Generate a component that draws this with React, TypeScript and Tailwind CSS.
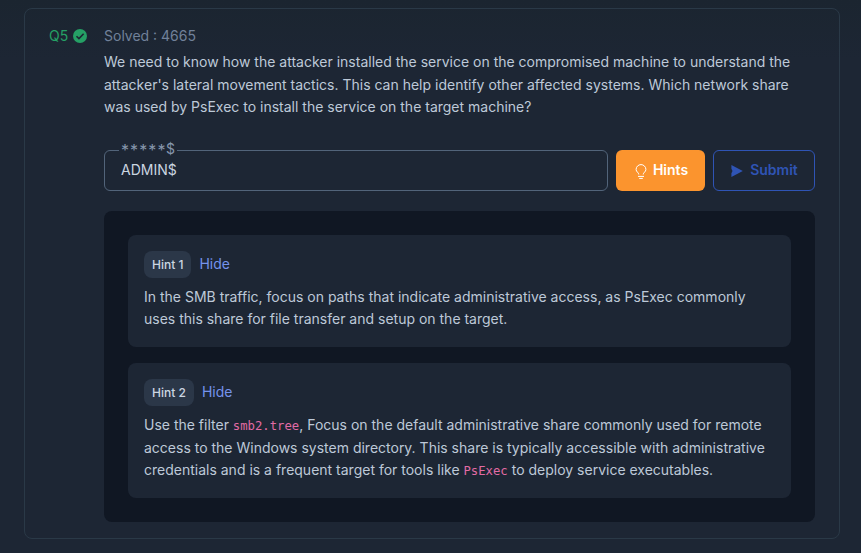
import type { ReactNode } from "react";

function CheckBadge() {
  return (
    <svg viewBox="0 0 24 24" className="h-[14px] w-[14px] shrink-0" aria-hidden="true">
      <circle cx="12" cy="12" r="12" fill="#25a065" />
      <path d="M6 12.4l4.2 4.1L18.2 8.2" fill="none" stroke="#1d2633" strokeWidth="2.8" />
    </svg>
  );
}

function Bulb() {
  return (
    <svg viewBox="0 0 12 15" className="mt-px h-[15px] w-3 shrink-0" fill="none" stroke="#fff" strokeWidth="1" aria-hidden="true">
      <path d="M3.8 10.5C3.8 8.5 1.1 7.9 1.1 5.5a4.9 4.9 0 0 1 9.8 0c0 2.4-2.7 3-2.7 5" strokeLinejoin="round" />
      <path d="M3 12.4h6M4.2 14.4h3.6" />
    </svg>
  );
}

function Arrow() {
  return (
    <svg viewBox="0 0 12 12" className="mt-px h-3 w-3 shrink-0" fill="#2f54b5" aria-hidden="true">
      <path d="M.4 0 11.8 6 .4 12V8.2L1.5 6 .4 3.8Z" />
    </svg>
  );
}

function Code({ children }: { children: ReactNode }) {
  return (
    <code className="font-['DejaVu_Sans_Mono',monospace] text-[12.25px] leading-none text-[#e26ba5]">{children}</code>
  );
}

function Hint({ n, children, className }: { n: number; children: ReactNode; className: string }) {
  return (
    <section className={`rounded-lg bg-[#1d2634] px-4 pt-4 ${className}`}>
      <div className="flex h-[27px] items-center gap-2">
        <span className="flex h-[27px] items-center rounded-lg bg-[#2b3748] px-2 pt-px text-[12px] font-medium text-[#cbd5e1]">
          Hint {n}
        </span>
        <button className="pb-[0.6px] text-[14px] text-[#7593ec]">Hide</button>
      </div>
      <p className="mt-2 whitespace-nowrap">{children}</p>
    </section>
  );
}

export default function App() {
  return (
    <main className="h-[553px] w-[861px] bg-[linear-gradient(#1b2530,#1d2634_60px)] px-6 pt-2 pr-[21px] font-['Inter',sans-serif] text-[14px] leading-[22.4px] text-[#bdc9d8]">
      <article className="flex h-[531px] rounded-lg border border-[#2a3947] pt-4 pr-6 pl-6">
        <div className="flex h-[22px] w-[55px] shrink-0 items-center gap-[5px] text-[#25a065]">
          <span>Q5</span>
          <CheckBadge />
        </div>
        <div className="w-[711px] shrink-0">
          <div className="h-[22px] text-[#718199]">Solved : 4665</div>
          <p className="mt-[4.25px] h-[66.75px] whitespace-nowrap">
            We need to know how the attacker installed the service on the compromised machine to understand the
            <br />
            attacker's lateral movement tactics. This can help identify other affected systems. Which network share
            <br />
            was used by PsExec to install the service on the target machine?
          </p>
          <div className="mt-8 flex h-[41px] gap-2">
            <div className="relative flex w-[504px] items-center rounded-md border border-[#52647a] px-4 text-[#cbd5e1]">
              ADMIN$
              <span className="absolute top-[-14px] left-[14px] flex h-[22px] items-center bg-[#1d2634] px-0.5 text-[#8797ad]">
                <span className="w-[45px] pt-[4px] text-[16px] tracking-[1.1px]">*****</span>
                <span className="pt-[3px]">$</span>
              </span>
            </div>
            <button className="flex w-[89px] items-center justify-center gap-1.5 rounded-md bg-[#fb942e] pl-0.5 font-semibold text-white">
              <Bulb />
              Hints
            </button>
            <button className="flex w-[102px] items-center justify-center gap-[7px] rounded-md border border-[#2f54b5] pl-px font-semibold text-[#2f54b5]">
              <Arrow />
              Submit
            </button>
          </div>
          <div className="mt-5 flex h-[311px] flex-col gap-4 rounded-lg bg-[#101723] p-6">
            <Hint n={1} className="h-[112.3px]">
              In the SMB traffic, focus on paths that indicate administrative access, as PsExec commonly
              <br />
              uses this share for file transfer and setup on the target.
            </Hint>
            <Hint n={2} className="h-[134.7px]">
              Use the filter <Code>smb2.tree</Code>, Focus on the default administrative share commonly used for remote
              <br />
              access to the Windows system directory. This share is typically accessible with administrative
              <br />
              credentials and is a frequent target for tools like <Code>PsExec</Code> to deploy service executables.
            </Hint>
          </div>
        </div>
      </article>
    </main>
  );
}
